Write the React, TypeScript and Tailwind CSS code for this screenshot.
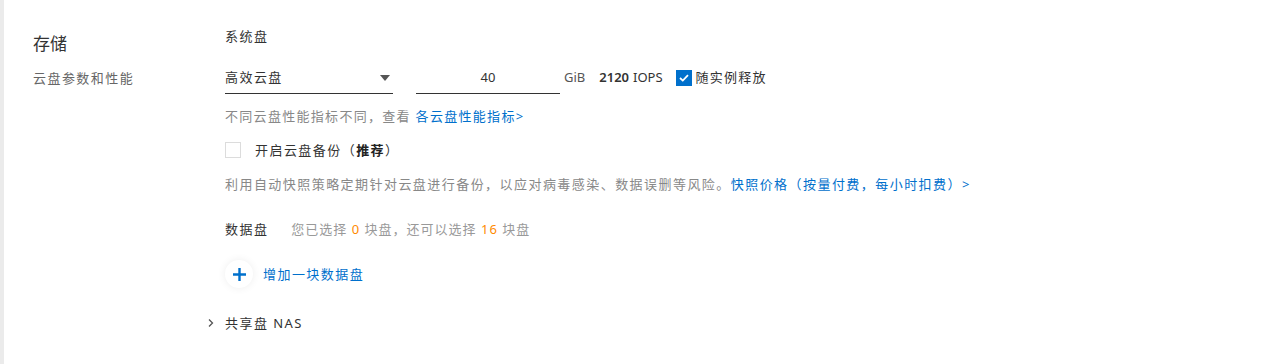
import React from 'react'

const ChevronRight = () => (
    <svg width="8" height="10" viewBox="0 0 8 10" fill="none">
        <path d="M2 1.5 L5.5 5 L2 8.5" stroke="#555" strokeWidth="1.3" />
    </svg>
)

const App = () => {
    return (
        <div className="flex h-[364px] w-full bg-white font-['Noto_Sans','Noto_Sans_CJK_SC',sans-serif] text-[#333]">
            <div className="w-[4px] shrink-0 bg-[#ebebeb]"></div>

            <div className="flex pl-[29px]">
                {/* left labels */}
                <div className="w-[192px] shrink-0">
                    <div className="mt-[32px] text-[17px] leading-[24px] text-[#333]">存储</div>
                    <div className="mt-[13px] text-[13px] leading-[18px] tracking-[1.45px] text-[#666]">云盘参数和性能</div>
                </div>

                {/* right form */}
                <div className="flex flex-col">
                    <div className="mt-[27px] text-[13px] leading-[18px] tracking-[1.45px]">系统盘</div>

                    <div className="mt-[17px] flex items-start">
                        <div className="flex h-[32px] w-[168px] items-center justify-between border-b border-[#333] pr-[3px]">
                            <span className="text-[13px] tracking-[1.45px]">高效云盘</span>
                            <svg width="10" height="6" viewBox="0 0 10 6">
                                <path d="M0 0 H10 L5 6 Z" fill="#555" />
                            </svg>
                        </div>
                        <div className="ml-[23px] flex h-[32px] w-[144px] items-center justify-center border-b border-[#333] text-[13px]">
                            40
                        </div>
                        <div className="flex h-[31px] items-center text-[13px]">
                            <span className="ml-[4px] text-[#555]">GiB</span>
                            <span className="ml-[14px] font-semibold">2120</span>
                            <span className="ml-[4px]">IOPS</span>
                            <span className="ml-[13px] flex h-[16px] w-[16px] items-center justify-center bg-[#0070cc]">
                                <svg width="10" height="8" viewBox="0 0 10 8" fill="none">
                                    <path d="M1 4 L3.8 6.6 L9 1.2" stroke="white" strokeWidth="1.8" />
                                </svg>
                            </span>
                            <span className="ml-[4px] tracking-[1.2px]">随实例释放</span>
                        </div>
                    </div>

                    <div className="mt-[13px] text-[13px] leading-[18px] tracking-[1.3px] text-[#888]">
                        不同云盘性能指标不同，查看 <a className="text-[#0070cc]">各云盘性能指标&gt;</a>
                    </div>

                    <div className="mt-[16px] flex items-center">
                        <span className="h-[16px] w-[16px] border border-[#dcdcdc] bg-white"></span>
                        <span className="ml-[14px] text-[13px] leading-[18px] tracking-[1.45px]">
                            开启云盘备份（<b className="font-bold text-[#222]">推荐</b>）
                        </span>
                    </div>

                    <div className="mt-[16px] whitespace-nowrap text-[13px] leading-[18px] tracking-[1.45px] text-[#888]">
                        利用自动快照策略定期针对云盘进行备份，以应对病毒感染、数据误删等风险。<a className="text-[#0070cc]">快照价格（按量付费，每小时扣费）&gt;</a>
                    </div>

                    <div className="mt-[27px] flex text-[13px] leading-[18px] tracking-[1.45px]">
                        <span>数据盘</span>
                        <span className="ml-[23px] tracking-[1px] text-[#999]">
                            您已选择 <span className="text-[#ff8a00]">0</span> 块盘，还可以选择 <span className="text-[#ff8a00]">16</span> 块盘
                        </span>
                    </div>

                    <div className="mt-[22px] flex items-center">
                        <span className="flex h-[28px] w-[28px] items-center justify-center rounded-full bg-white shadow-[0_0_8px_rgba(0,0,0,0.07)]">
                            <svg width="13" height="13" viewBox="0 0 13 13">
                                <path d="M6.5 0 V13 M0 6.5 H13" stroke="#0070cc" strokeWidth="2.4" />
                            </svg>
                        </span>
                        <span className="ml-[10px] text-[13px] leading-[18px] tracking-[1.45px] text-[#0070cc]">增加一块数据盘</span>
                    </div>

                    <div className="ml-[-20px] mt-[26px] flex items-center">
                        <span className="flex w-[20px] items-center pl-[2px]">
                            <ChevronRight />
                        </span>
                        <span className="text-[13px] leading-[18px] tracking-[1.45px]">共享盘 NAS</span>
                    </div>
                </div>
            </div>
        </div>
    )
}

export default App
